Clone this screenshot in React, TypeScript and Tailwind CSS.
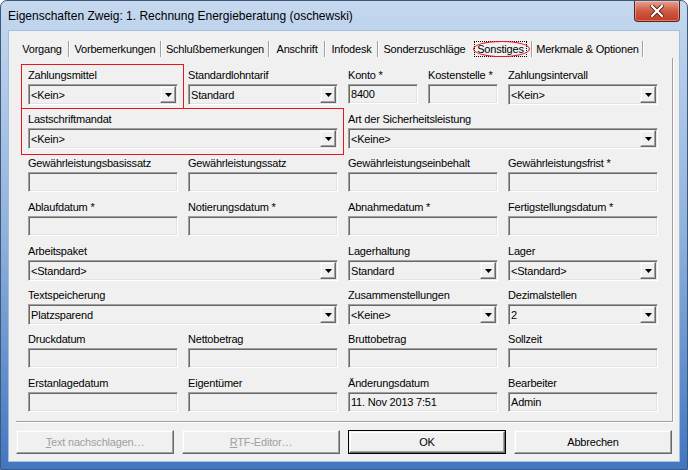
import React from 'react';

const sunken =
  'border border-t-[#a0a0a0] border-l-[#a0a0a0] border-b-white border-r-white shadow-[inset_1px_1px_0_#696969,inset_-1px_-1px_0_#e3e3e3]';
const raised =
  'border border-t-[#f4f4f4] border-l-[#f4f4f4] border-b-[#696969] border-r-[#696969] shadow-[inset_-1px_-1px_0_#a0a0a0,inset_1px_1px_0_#ffffff]';

function Arrow() {
  return (
    <div className={`w-[16px] h-[17px] mr-[1px] flex items-center justify-center bg-[#f0f0f0] ${raised}`}>
      <svg width="7" height="4" viewBox="0 0 7 4">
        <polygon points="0,0 7,0 3.5,4" fill="#000" />
      </svg>
    </div>
  );
}

function Combo({ label, value, span }: { label: string; value: string; span?: boolean }) {
  return (
    <div className={span ? 'col-span-2' : ''}>
      <div className="h-[16px] leading-[14px]">{label}</div>
      <div className={`h-[21px] flex items-center bg-[#f0f0f0] ${sunken}`}>
        <span className="flex-1 pl-[2px] leading-[14px]">{value}</span>
        <Arrow />
      </div>
    </div>
  );
}

function Field({ label, value }: { label: string; value?: string }) {
  return (
    <div>
      <div className="h-[16px] leading-[14px]">{label}</div>
      <div className={`h-[20px] flex items-center pl-[2px] bg-[#f0f0f0] ${sunken}`}>{value}</div>
    </div>
  );
}

const tabs = [
  { name: 'Vorgang', w: 'w-[54px]' },
  { name: 'Vorbemerkungen', w: 'w-[92px]' },
  { name: 'Schlußbemerkungen', w: 'w-[108px]' },
  { name: 'Anschrift', w: 'w-[56px]' },
  { name: 'Infodesk', w: 'w-[53px]' },
  { name: 'Sonderzuschläge', w: 'w-[91px]', noSep: true },
  { name: 'Sonstiges', w: 'w-[63px]', active: true },
  { name: 'Merkmale & Optionen', w: 'w-[111px]' },
];

export default function App() {
  return (
    <div
      className="w-[688px] h-[470px] relative overflow-hidden rounded-t-[7px] border border-[#3d5878] bg-gradient-to-b from-[#c5d8ef] via-[#8fb1dc] to-[#4276c0] text-black"
      style={{ fontFamily: '"Liberation Sans", Arial, sans-serif' }}
    >
      {/* title bar */}
      <div className="h-[29px] flex items-center pl-[7px] text-[12px]">
        Eigenschaften Zweig: 1. Rechnung Energieberatung (oschewski)
      </div>
      <div className="absolute top-0 right-[7px] w-[46px] h-[21px] rounded-b-[4px] border border-t-0 border-[#5b2118] bg-gradient-to-b from-[#e5a18f] via-[#cf5a43] to-[#c23a24] shadow-[inset_0_0_0_1px_rgba(255,255,255,0.35)] flex items-center justify-center">
        <svg width="14" height="12" viewBox="0 0 14 12">
          <path d="M2 1 L12 11 M12 1 L2 11" stroke="#5a1e16" strokeWidth="4" strokeLinecap="square" />
          <path d="M2 1 L12 11 M12 1 L2 11" stroke="#ffffff" strokeWidth="2.2" strokeLinecap="square" />
        </svg>
      </div>

      {/* client area */}
      <div className="ml-[7px] w-[672px] h-[432px] bg-[#f0f0f0] border border-[#a8bfdc] text-[11px] tracking-[-0.2px] px-[7px] pt-[9px]">
        {/* tab strip */}
        <div className="h-[18px] flex items-center">
          {tabs.map((t) => (
            <div key={t.name} className={`${t.w} h-[18px] flex items-center relative`}>
              <span className="flex-1 text-center leading-[14px]">
                {t.active ? (
                  <span className="relative inline-block px-[2px] border border-dotted border-black leading-[14px]">
                    {t.name}
                    <span className="absolute left-[-2px] right-[-4px] top-[-1px] bottom-[-1px] rounded-[50%] border border-[#e8141e]" />
                  </span>
                ) : (
                  t.name
                )}
              </span>
              {!t.noSep && <span className="w-[1px] h-[16px] mr-[1px] bg-[#a0a0a0] shadow-[1px_0_0_#ffffff]" />}
            </div>
          ))}
        </div>

        {/* tab page */}
        <div className="w-[657px] h-[364px] relative border-r border-b border-[#a0a0a0] shadow-[1px_1px_0_#ffffff] pl-[12px] pt-[10px]">
          <div className="grid grid-cols-[150px_150px_150px_150px] auto-rows-[37px] gap-x-[10px] gap-y-[7px]">
            <Combo label="Zahlungsmittel" value="<Kein>" />
            <Combo label="Standardlohntarif" value="Standard" />
            <div className="grid grid-cols-[70px_70px] gap-x-[10px]">
              <Field label="Konto *" value="8400" />
              <Field label="Kostenstelle *" />
            </div>
            <Combo label="Zahlungsintervall" value="<Kein>" />

            <Combo label="Lastschriftmandat" value="<Kein>" span />
            <Combo label="Art der Sicherheitsleistung" value="<Keine>" span />

            <Field label="Gewährleistungsbasissatz" />
            <Field label="Gewährleistungssatz" />
            <Field label="Gewährleistungseinbehalt" />
            <Field label="Gewährleistungsfrist *" />

            <Field label="Ablaufdatum *" />
            <Field label="Notierungsdatum *" />
            <Field label="Abnahmedatum *" />
            <Field label="Fertigstellungsdatum *" />

            <Combo label="Arbeitspaket" value="<Standard>" span />
            <Combo label="Lagerhaltung" value="Standard" />
            <Combo label="Lager" value="<Standard>" />

            <Combo label="Textspeicherung" value="Platzsparend" span />
            <Combo label="Zusammenstellungen" value="<Keine>" />
            <Combo label="Dezimalstellen" value="2" />

            <Field label="Druckdatum" />
            <Field label="Nettobetrag" />
            <Field label="Bruttobetrag" />
            <Field label="Sollzeit" />

            <Field label="Erstanlagedatum" />
            <Field label="Eigentümer" />
            <Field label="Änderungsdatum" value="11. Nov 2013 7:51" />
            <Field label="Bearbeiter" value="Admin" />
          </div>

          {/* annotation boxes */}
          <div className="absolute left-[5px] top-[6px] w-[163px] h-[45px] border border-[#e8141e]" />
          <div className="absolute left-[5px] top-[50px] w-[323px] h-[47px] border border-[#e8141e]" />
        </div>

        {/* buttons */}
        <div className="mt-[8px] flex gap-[8px]">
          <button className={`w-[158px] h-[24px] bg-[#f0f0f0] text-[#a0a0a0] ${raised}`}>
            <span className="underline underline-offset-[1px]">T</span>ext nachschlagen…
          </button>
          <button className={`w-[158px] h-[24px] bg-[#f0f0f0] text-[#a0a0a0] ${raised}`}>
            <span className="underline underline-offset-[1px]">R</span>TF-Editor…
          </button>
          <div className="w-[158px] h-[24px] border border-black">
            <button className={`w-full h-full bg-[#f0f0f0] ${raised}`}>OK</button>
          </div>
          <button className={`w-[158px] h-[24px] bg-[#f0f0f0] ${raised}`}>Abbrechen</button>
        </div>
      </div>
    </div>
  );
}
